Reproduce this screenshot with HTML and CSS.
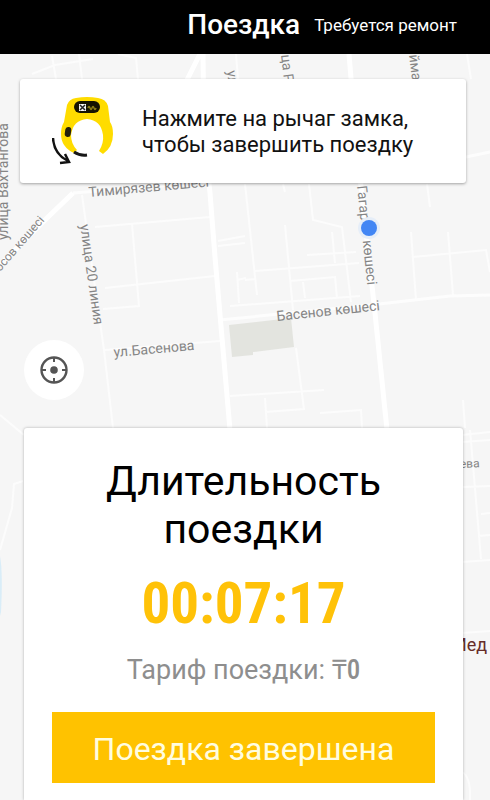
FILE: index.html
```html
<!DOCTYPE html>
<html lang="ru">
<head>
<meta charset="utf-8">
<meta name="viewport" content="width=device-width, initial-scale=1">
<title>Поездка</title>
<link rel="stylesheet" href="styles.css">
</head>
<body>
<header class="topbar">
  <h1 class="topbar-title">Поездка</h1>
  <a class="topbar-link" href="#repair">Требуется ремонт</a>
</header>
<main class="screen">
  <svg class="map" viewBox="0 54 490 746" preserveAspectRatio="xMidYMin slice" aria-hidden="true">
    <path class="water" d="M0 556Q3 572 1 612L0 616Z"/>
    <path class="block" d="M229 325L291 318L294 347L253 352L253 355L232 357Z"/>
    <g class="road minor">
      <path d="M32 74L55 65L93 59M52 56L56 79M79 54L82 79M118 54L136 58L138 79M236 54L238 79M467 54L471 79M82 195L89 245L104 350L113 428"/>
      <path d="M95 227L210 217M132 224L139 306L103 309M105 288L215 276M105 350L220 341M218 241L245 236M218 246L245 243M237 272L239 303M237 280L246 278"/>
      <path d="M245 184L257 295M283 184L285 192M309 184L313 220L342 227L351 302M285 225L293 310M332 232L335 263M307 255L356 252M255 271L359 263M290 281L335 277L337 298M303 282L305 298M245 280L256 279M230 306L360 296"/>
      <path d="M427 184L430 207M411 232L416 300M448 232L453 295M413 257L486 250L490 272M296 348L304 409L265 412M230 396L324 390M265 398L267 428M320 413L361 410L362 428M463 400L465 428"/>
      <path d="M0 415L24 435M23 481L14 484L12 508L4 536L0 550M462 435L490 432M462 442L490 440M470 430L481 559M463 487L490 486M481 514L490 513M462 562L490 560M478 536L490 535M462 633L490 631M462 772Q471 777 470 800"/>
    </g>
    <g class="road medium">
      <path d="M73 193L210 182L466 157L490 152M220 320L370 305L450 296L490 295"/>
    </g>
    <g class="road major">
      <path d="M0 265L47 218L73 193M200 54L187 80M203 54L204 140L210 193L215 257L230 430M349 54L357 150L375 313L387 430"/>
    </g>
    <g class="label">
      <text transform="translate(8 240) rotate(-90)">улица Вахтангова</text>
      <text class="small" transform="translate(0 272) rotate(-49)">осов көшесі</text>
      <text transform="translate(89 197) rotate(-5)">Тимирязев көшесі</text>
      <text transform="translate(80 225) rotate(82)">улица 20 линия</text>
      <text transform="translate(114 357) rotate(-5)">ул.Басенова</text>
      <text transform="translate(277 321) rotate(-6)">Басенов көшесі</text>
      <text transform="translate(357 186) rotate(84)">Гагарин көшесі</text>
      <text transform="translate(227 71) rotate(83)">ул</text>
      <text transform="translate(281 55) rotate(83)">ца Р</text>
      <text transform="translate(409 55) rotate(83)">йма</text>
      <text class="small" transform="translate(460 468) rotate(-2)">ева</text>
      <text class="place" x="451" y="651">Мед</text>
    </g>
    <circle class="halo" cx="369" cy="228" r="11"/>
    <circle class="position" cx="369" cy="228" r="8"/>
  </svg>

  <section class="notice">
    <svg class="lock" viewBox="0 0 66 74" aria-hidden="true">
      <path fill="#ffdc00" d="M15 11Q17 5 24 4Q35 2 46 4Q54 5 56 12L58 28Q61 32 61 40Q61 53 51 60L47 57Q52 49 51 41Q49 26 35 25Q21 26 19 41Q19 50 25 56L22 59Q9 53 9 40Q9 33 12 28Z"/>
      <rect x="22" y="7" width="26" height="12" rx="6" fill="#151300"/>
      <rect x="27" y="10" width="7" height="7" fill="#f5f5f5"/>
      <path d="M28 11L33 16M33 11L28 16" stroke="#222" stroke-width="1.5"/>
      <path d="M36 14Q37 11 38 14T40 14T42 14T44 14" fill="none" stroke="#8a7c13" stroke-width="1.5"/>
      <rect x="13" y="33" width="6" height="10" rx="3" fill="#25200b" transform="rotate(8 16 38)"/>
      <path d="M22 58Q28 62 35 61" fill="none" stroke="#171717" stroke-width="3"/>
      <path d="M1 44Q2 60 16 67M13 60L17 68L8 69" fill="none" stroke="#111" stroke-width="2.5"/>
    </svg>
    <p class="notice-text">Нажмите на рычаг замка, чтобы завершить поездку</p>
  </section>

  <button class="locate" type="button" aria-label="Моё местоположение">
    <svg class="locate-icon" viewBox="0 0 28 28" aria-hidden="true">
      <circle cx="14" cy="14" r="12.5" fill="none" stroke="#555" stroke-width="2.4"/>
      <circle cx="14" cy="14" r="3.8" fill="#555"/>
      <path d="M14 1V6M14 22V27M1 14H6M22 14H27" stroke="#555" stroke-width="2"/>
    </svg>
  </button>

  <section class="panel">
    <h2 class="panel-title">Длительность поездки</h2>
    <time class="timer">00:07:17</time>
    <p class="tariff">Тариф поездки: <strong class="price">₸0</strong></p>
    <button class="finish" type="button">Поездка завершена</button>
  </section>
</main>
</body>
</html>
```

FILE: styles.css
```css
* {
  box-sizing: border-box;
}

body {
  margin: 0;
  min-height: 100vh;
  display: flex;
  flex-direction: column;
  font-family: Roboto, "Noto Sans", sans-serif;
  color: #111;
  background: #f6f6f6;
}

h1,
h2,
p {
  margin: 0;
  font-weight: 400;
}

.topbar {
  display: flex;
  align-items: center;
  justify-content: flex-end;
  gap: 14px;
  min-height: 54px;
  padding: 0 33px 4px;
  background: #000;
}

.topbar-title {
  font-size: 28px;
  line-height: 36px;
  font-weight: 500;
  color: #fff;
}

.topbar-link {
  font-size: 17px;
  line-height: 24px;
  color: #fff;
  text-decoration: none;
}

.screen {
  position: relative;
  flex: 1;
  display: flex;
  flex-direction: column;
  padding: 25px 24px 0;
  overflow: hidden;
}

.map {
  position: absolute;
  inset: 0;
  width: 100%;
  height: 100%;
}

.water {
  fill: #d9edf8;
}

.block {
  fill: #e3e4df;
}

.road {
  fill: none;
  stroke: #fff;
}

.minor {
  stroke: #fcfcfc;
  stroke-width: 2;
}

.medium {
  stroke: #fdfdfd;
  stroke-width: 3;
}

.major {
  stroke-width: 5;
}

.label {
  font-size: 14px;
  fill: #858585;
}

.label .small {
  font-size: 12px;
}

.label .place {
  font-size: 18px;
  fill: #672d28;
}

.halo {
  fill: #e6eef8;
}

.position {
  fill: #4286f4;
}

.notice,
.locate,
.panel {
  position: relative;
  background: #fff;
}

.notice {
  display: flex;
  align-items: center;
  gap: 24px;
  min-height: 104px;
  margin: 0 0 0 -4px;
  padding: 0 32px;
  border-radius: 3px;
  box-shadow: 0 1px 3px rgba(0, 0, 0, 0.35);
}

.lock {
  flex: none;
  width: 66px;
  height: 74px;
}

.notice-text {
  flex: 1;
  padding-top: 2px;
  font-size: 22px;
  line-height: 26px;
}

.locate {
  display: flex;
  align-items: center;
  justify-content: center;
  width: 60px;
  height: 60px;
  margin-top: 157px;
  padding: 0;
  border: 0;
  border-radius: 50%;
}

.locate-icon {
  width: 28px;
  height: 28px;
}

.panel {
  flex: 1;
  display: flex;
  flex-direction: column;
  align-items: center;
  margin: 28px 3px 0 0;
  padding: 29px 28px 17px;
  border-radius: 3px 3px 0 0;
  box-shadow: 0 0 3px rgba(0, 0, 0, 0.3);
  text-align: center;
}

.panel-title {
  max-width: 320px;
  font-size: 41px;
  line-height: 48px;
  color: #000;
}

.timer {
  margin-top: 16px;
  font-family: "Roboto Condensed", Roboto, sans-serif;
  font-size: 57px;
  line-height: 70px;
  font-weight: 700;
  color: #ffc208;
}

.tariff {
  margin-top: 15px;
  font-size: 27px;
  line-height: 32px;
  color: #8e8e8e;
}

.price {
  font-family: "Roboto Condensed", Roboto, sans-serif;
  font-weight: 500;
}

.finish {
  width: 100%;
  min-height: 71px;
  margin-top: 26px;
  padding: 2px 0 0;
  border: 0;
  background: #ffc200;
  font: 400 32px/40px Roboto, "Noto Sans", sans-serif;
  color: #fffde0;
}
```
